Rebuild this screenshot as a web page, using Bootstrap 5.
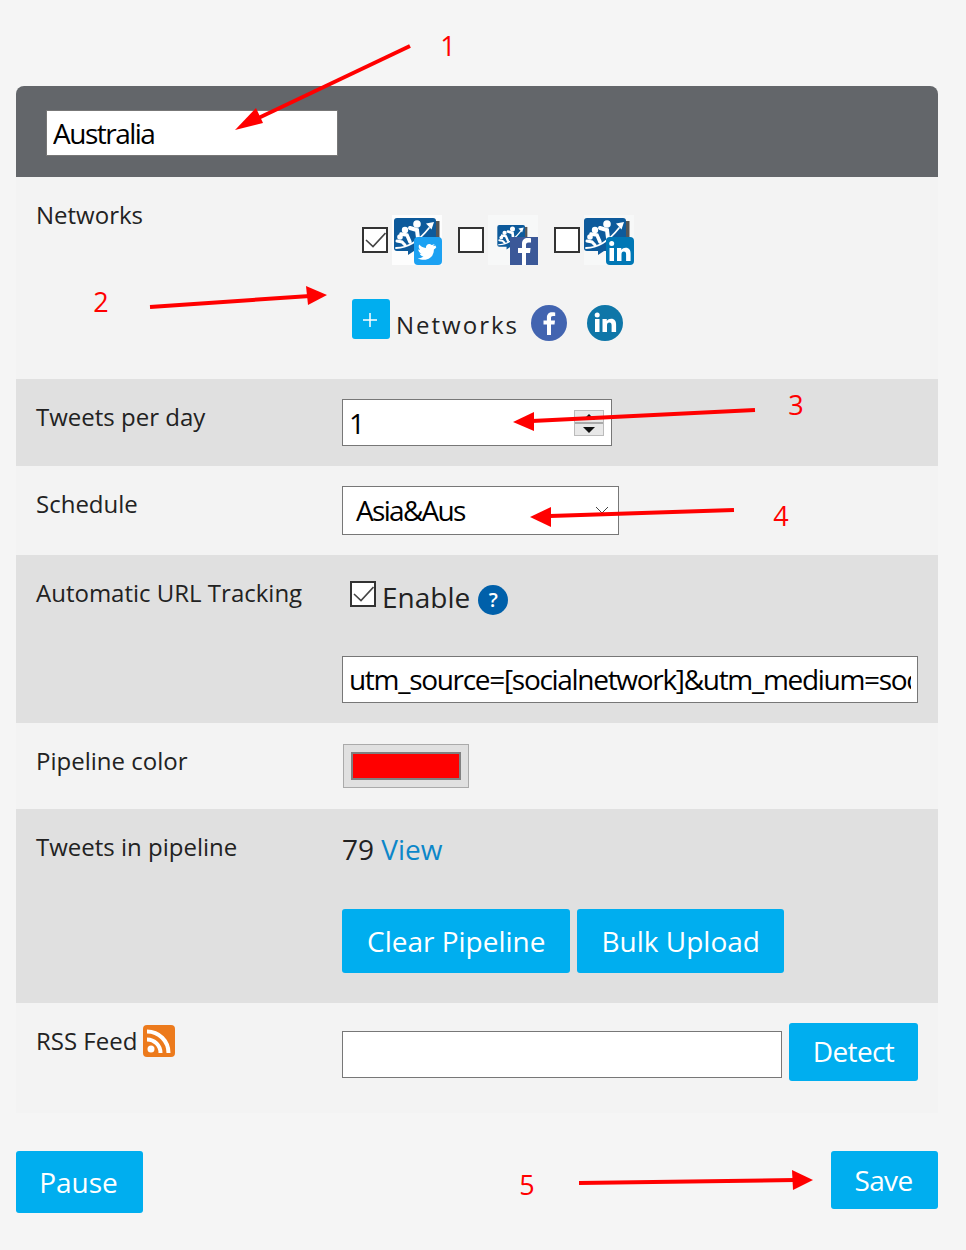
<!DOCTYPE html>
<html lang="en">
<head>
<meta charset="utf-8">
<title>Pipeline settings</title>
<link href="https://cdn.jsdelivr.net/npm/bootstrap@5.3.0/dist/css/bootstrap.min.css" rel="stylesheet">
<style>
html,body{margin:0;background:#f5f5f5}
body{font-family:"Open Sans","Noto Sans",sans-serif;color:#222;position:relative;height:1250px;overflow:hidden}
.page-wrap{padding:86px 28px 0 16px}
.head-bar{height:91px;background:#63666a;border-radius:8px 8px 0 0;padding:24px 0 0 30px}
.set-row{display:flex;padding:0 20px}
.set-row.lite{background:#f3f3f3}
.set-row.dark{background:#e0e0e0}
.lab{width:306px;flex:none;font-size:24px;line-height:32px;color:#222;margin-top:2px}
.r-net .lab{margin-top:-1px}
.r-col .lab{margin-top:1px}
.r-rss .lab{margin-top:0}
.fld{flex:1;min-width:0}
.r-net{height:202px;padding-top:23px}
.r-tw{height:87px;padding-top:20px}
.r-sch{height:89px;padding-top:20px}
.r-url{height:168px;padding-top:20px}
.r-col{height:86px;padding-top:21px}
.r-pipe{height:194px;padding-top:20px}
.r-rss{height:110px;padding-top:20px}
.txt-in{display:block;border:1px solid #777;background:#fff;border-radius:0;font-family:"Open Sans",sans-serif;font-size:28px;color:#000;letter-spacing:-1.5px;padding:0 6px;outline:0}
.in-name{width:292px;height:46px}
.in-num{width:270px;height:47px;position:relative;display:flex;align-items:center}
.in-sel{width:277px;height:49px;position:relative;display:flex;align-items:center;padding:0 0 1px 13px;letter-spacing:-1.7px}
.in-url{width:576px;height:47px;margin-top:41px;letter-spacing:-1.3px;padding-bottom:2px}
.in-rss{width:440px;height:47px;margin-top:8px}
.spin{position:absolute;right:7px;top:10px;width:30px;height:26px;border:1px solid #bbb;background:#e8e8e8;display:flex;flex-direction:column}
.spin i{flex:1;display:flex;align-items:center;justify-content:center}
.spin i+i{border-top:2px solid #aaa}
.chev{position:absolute;right:9px;top:19px}
.box{width:26px;height:26px;flex:none;border:2px solid #333;background:#fff;display:inline-flex;align-items:center;justify-content:center}
.net-picks{display:flex;align-items:center;padding:15px 0 0 20px;height:50px;margin-top:7px}
.net-pic{width:50px;height:50px;flex:none;margin-left:4px;margin-right:16px;display:block}
.net-add{display:flex;align-items:center;margin:40px 0 0 10px}
.add-sq{width:38px;height:40px;background:#00aeef;border-radius:3px;color:#fff;display:flex;align-items:center;justify-content:center;padding:2px 2px 0 0}
.net-word{font-size:24px;letter-spacing:2px;margin-left:6px;margin-top:12px;color:#222;line-height:32px;width:135px}
.round-ic{width:36px;height:36px;display:block;margin-right:20px;margin-top:8px}
.en-line{display:flex;align-items:center;padding-left:8px;height:36px;margin-top:4px;font-size:28px;color:#222}
.en-line .box{margin-right:6px;margin-top:-7px}
.q-dot{width:30px;height:30px;border-radius:50%;background:#0060aa;color:#fff;font-size:20px;font-weight:600;display:flex;align-items:center;justify-content:center;margin-left:8px;margin-top:5px}
.swatch{width:126px;height:44px;border:1px solid #aaa;background:#e0e0e0;padding:7px;margin-left:1px;display:block}
.swatch span{display:block;height:100%;background:#f00;border:2px solid #808080}
.pipe-count{font-size:28px;line-height:36px;margin-top:2px;color:#222}
.pipe-count a{color:#0c87c9;text-decoration:none}
.act{background:#00aeef;color:#fff;border:0;border-radius:3px;font-family:"Open Sans",sans-serif;font-size:28px;padding:0 24px 0 25px}
.act:hover,.act:active{background:#00aeef!important;color:#fff!important}
.pipe-btns{display:flex;gap:7px;margin-top:42px}
.pipe-btns .act{height:64px;padding-bottom:1px}
.rss-line{display:flex;justify-content:space-between;align-items:flex-start}
.rss-line .act{height:58px;padding:0 0 2px;width:129px;letter-spacing:-.6px}
.rss-ic{display:inline-block;vertical-align:-5px;position:relative;top:2px;margin-left:-1px}
.foot-line{display:flex;justify-content:space-between;align-items:flex-start;padding-top:38px}
.foot-line .btn-a{height:62px;width:127px;padding:0 2px 0 0}
.foot-line .btn-b{height:58px;width:107px;letter-spacing:-.6px;padding:0 2px 0 0}
.marks{position:absolute;left:0;top:0;width:966px;height:1250px;pointer-events:none}
.marks text{font-family:"Open Sans",sans-serif;font-size:27px;fill:#f00;text-anchor:middle}
</style>
</head>
<body>
<svg width="0" height="0" class="position-absolute">
<defs>
<filter id="soft" x="-5%" y="-5%" width="110%" height="110%"><feGaussianBlur stdDeviation=".45"/></filter>
<g id="crew">
<path d="M44 6h3.500v25H44z" fill="#555"/>
<path d="M5 3h36a3 3 0 0 1 3 3v27a3 3 0 0 1-3 3H22l-6 4v-4H5a3 3 0 0 1-3-3V6a3 3 0 0 1 3-3z" fill="#0b5a9b"/>
<g fill="#fff"><circle cx="25" cy="9" r="3.800"/><circle cx="13" cy="15" r="3.200"/><circle cx="8" cy="22" r="2.800"/></g>
<g fill="none" stroke="#fff" stroke-linecap="round"><path d="M18 13l7 2 1 8" stroke-width="4"/><path d="M9 19l6 1 3 7" stroke-width="3.500"/><path d="M5 26l5 1 3 3" stroke-width="3"/><path d="M4 33c12 0 22-6 33-20" stroke-width="1.800"/></g>
<path d="M42 7l-8 1.500 5.500 6z" fill="#fff"/>
</g>
<g id="crew-s" transform="translate(8 8) scale(.66)"><use href="#crew"/></g>
<g id="crew-l" transform="translate(-2 0)"><use href="#crew"/></g>
</defs>
</svg>

<div class="page-wrap">
  <div class="head-bar"><input class="txt-in in-name" value="Australia" aria-label="Name"></div>

  <div class="set-row lite r-net">
    <div class="lab">Networks</div>
    <div class="fld">
      <div class="net-picks">
        <span class="box"><svg width="22" height="22" viewBox="0 0 22 22"><path d="M2 11l7 6.500L21.500 4" fill="none" stroke="#444" stroke-width="1.600"/></svg></span>
        <svg class="net-pic" viewBox="0 0 50 50"><g filter="url(#soft)"><rect width="50" height="50" fill="#fdfdfd"/><use href="#crew"/><rect x="22" y="22" width="28" height="28" rx="4" fill="#1da1f2"/><path d="M43 30c-1 .5-2 .7-3 .8 1-.6 2-1.500 2-2.500-1 .6-2 1-3 1.200-2-2-6-1-6 3-3 0-6-2-7-3.500-1 2-.5 4 1 5.500-.8 0-1.500-.3-2-.6 0 2 1.500 4 3.500 4.500-.6.2-1.300.2-2 .1.600 1.800 2 3 4 3-2 1.500-4 2-6 1.800 7 4 17 1 17-9 1-.7 1.800-1.600 2.500-2.500z" fill="#fff" transform="translate(2.500 2) scale(.95)"/></g></svg>
        <span class="box ms-0"></span>
        <svg class="net-pic" viewBox="0 0 50 50"><g filter="url(#soft)"><rect width="50" height="50" fill="#f7f8f8"/><use href="#crew-s"/><rect x="22" y="22" width="28" height="28" fill="#3b5998"/><path d="M38 50V38h4l.6-5H38v-3c0-1.500.5-2.500 2.500-2.500H43v-4.300c-1-.1-2-.2-3.300-.2-3.300 0-5.700 2-5.700 5.700V33h-4v5h4v12z" fill="#fff"/></g></svg>
        <span class="box"></span>
        <svg class="net-pic" viewBox="0 0 50 50"><g filter="url(#soft)"><rect width="50" height="50" fill="#f7f8f8"/><use href="#crew-l"/><rect x="22" y="22" width="28" height="28" rx="4" fill="#0077b5"/><path d="M25.500 33h4.500v13h-4.500zM27.700 26a2.500 2.500 0 1 1 0 5 2.500 2.500 0 0 1 0-5zM33 33h4.300v2c1-1.500 2.500-2.300 4.300-2.300 3.700 0 5 2.400 5 6V46h-4.500v-6.500c0-1.800-.5-3-2.200-3-1.800 0-2.400 1.300-2.400 3V46H33z" fill="#fff"/></g></svg>
      </div>
      <div class="net-add">
        <div class="add-sq"><svg width="14" height="14" viewBox="0 0 14 14"><path d="M7 0v14M0 7h14" stroke="#fff" stroke-width="1.500"/></svg></div>
        <div class="net-word">Networks</div>
        <svg class="round-ic" viewBox="0 0 36 36"><circle cx="18" cy="18" r="18" fill="#4264b0"/><path d="M20 30V19.500h3.500l.5-4h-4V13c0-1.200.4-2 2-2h2.200V7.400c-.4 0-1.700-.2-3.100-.2-3.100 0-5.200 1.900-5.200 5.300v3H12.500v4H16V30z" fill="#fff"/></svg>
        <svg class="round-ic" viewBox="0 0 36 36"><circle cx="18" cy="18" r="18" fill="#0e76a8"/><path d="M8 14h4.500v13H8zM10.200 7.500a2.500 2.500 0 1 1 0 5 2.500 2.500 0 0 1 0-5zM15.500 14h4.300v2c1-1.500 2.500-2.300 4.300-2.300 3.700 0 5 2.400 5 6V27h-4.500v-6.500c0-1.800-.5-3-2.200-3-1.800 0-2.400 1.300-2.400 3V27h-4.500z" fill="#fff"/></svg>
      </div>
    </div>
  </div>

  <div class="set-row dark r-tw">
    <div class="lab">Tweets per day</div>
    <div class="fld">
      <div class="txt-in in-num">1
        <div class="spin"><i><svg width="12" height="6" viewBox="0 0 12 6"><path d="M6 0l6 6H0z" fill="#111"/></svg></i><i><svg width="12" height="6" viewBox="0 0 12 6"><path d="M0 0h12L6 6z" fill="#111"/></svg></i></div>
      </div>
    </div>
  </div>

  <div class="set-row lite r-sch">
    <div class="lab">Schedule</div>
    <div class="fld">
      <div class="txt-in in-sel">Asia&amp;Aus
        <svg class="chev" width="14" height="8" viewBox="0 0 14 8"><path d="M1 1l6 6 6-6" fill="none" stroke="#444"/></svg>
      </div>
    </div>
  </div>

  <div class="set-row dark r-url">
    <div class="lab">Automatic URL Tracking</div>
    <div class="fld">
      <div class="en-line">
        <span class="box"><svg width="22" height="22" viewBox="0 0 22 22"><path d="M2 11l7 6.500L21.500 4" fill="none" stroke="#444" stroke-width="1.600"/></svg></span>
        Enable
        <span class="q-dot">?</span>
      </div>
      <input class="txt-in in-url" value="utm_source=[socialnetwork]&amp;utm_medium=social" aria-label="URL tracking">
    </div>
  </div>

  <div class="set-row lite r-col">
    <div class="lab">Pipeline color</div>
    <div class="fld"><div class="swatch"><span></span></div></div>
  </div>

  <div class="set-row dark r-pipe">
    <div class="lab">Tweets in pipeline</div>
    <div class="fld">
      <div class="pipe-count">79 <a href="#">View</a></div>
      <div class="pipe-btns">
        <button class="btn act" type="button">Clear Pipeline</button>
        <button class="btn act" type="button">Bulk Upload</button>
      </div>
    </div>
  </div>

  <div class="set-row lite r-rss">
    <div class="lab">RSS Feed <svg class="rss-ic" width="32" height="32" viewBox="0 0 32 32"><rect width="32" height="32" rx="4" fill="#ec7a1c"/><circle cx="8" cy="24" r="3.500" fill="#fff"/><path d="M4 14.500c7.500 0 13.500 6 13.500 13.500M4 6.500C16 6.500 25.500 16 25.500 28" fill="none" stroke="#fff" stroke-width="4"/></svg></div>
    <div class="fld">
      <div class="rss-line">
        <input class="txt-in in-rss" aria-label="RSS Feed">
        <button class="btn act" type="button">Detect</button>
      </div>
    </div>
  </div>

  <div class="foot-line">
    <button class="btn act btn-a" type="button">Pause</button>
    <button class="btn act btn-b" type="button">Save</button>
  </div>
</div>

<svg class="marks" viewBox="0 0 966 1250">
  <g stroke="#f00" stroke-width="4" fill="none">
    <path d="M410 46L250 122"/><path d="M150 307L310 296"/><path d="M755 410L532 421"/><path d="M734 510L550 516"/><path d="M579 1183L795 1180"/>
  </g>
  <g fill="#f00">
    <path d="M235 130L256 108 263 123z"/>
    <path d="M327 295L306 286 308 305z"/>
    <path d="M513 422L534 412 534 431z"/>
    <path d="M530 517L551 507 551 527z"/>
    <path d="M813 1180L792 1170 793 1190z"/>
  </g>
  <text x="448" y="56">1</text>
  <text x="101" y="312">2</text>
  <text x="796" y="415">3</text>
  <text x="781" y="526">4</text>
  <text x="527" y="1195">5</text>
</svg>
<script src="https://cdn.jsdelivr.net/npm/bootstrap@5.3.0/dist/js/bootstrap.bundle.min.js"></script>
</body>
</html>
